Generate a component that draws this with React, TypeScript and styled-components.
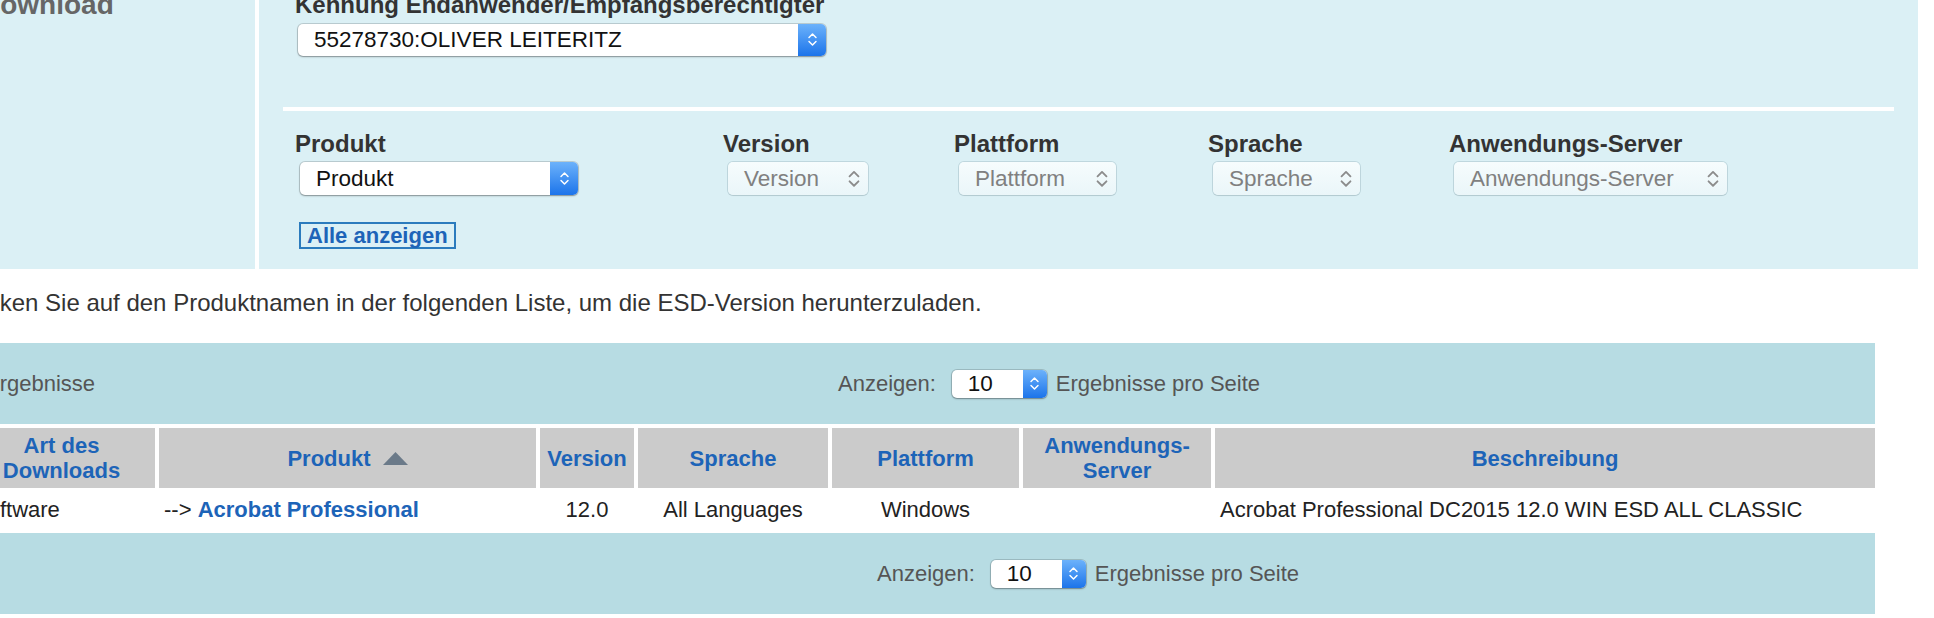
import styled, { createGlobalStyle } from "styled-components";

const GlobalStyle = createGlobalStyle`
  html, body {
    margin: 0;
    padding: 0;
    background: #fff;
    overflow: hidden;
  }
  body {
    font-family: "Liberation Sans", Arial, Helvetica, sans-serif;
    color: #333;
  }
`;

const columns = "187px 377px 94px 190px 187px 188px 660px";

const Page = styled.div`
  width: 1934px;
  height: 618px;
  overflow: hidden;
`;

const TopSection = styled.section`
  display: flex;
  gap: 4px;
  width: 1918px;
  height: 269px;
`;

const LeftPanel = styled.aside`
  width: 255px;
  flex-shrink: 0;
  background: #dbf0f5;
  overflow: hidden;
`;

const PanelTitle = styled.h2`
  margin: -11px 0 0 -20px;
  font-size: 28px;
  line-height: 32px;
  font-weight: bold;
  color: #666;
`;

const FilterPanel = styled.div`
  flex: 1;
  background: #dbf0f5;
  padding: 0 24px;
  overflow: hidden;
`;

const Field = styled.div`
  padding-left: 12px;
  margin-top: -9px;
`;

const Label = styled.div`
  font-size: 24px;
  line-height: 28px;
  font-weight: bold;
  color: #333;
  white-space: nowrap;
`;

const Divider = styled.hr`
  margin: 51px 0 0;
  border: 0;
  height: 4px;
  background: #fff;
`;

const FieldGrid = styled.div`
  display: grid;
  grid-template-columns: 428px 231px 254px 241px auto;
  padding-left: 12px;
  margin-top: 19px;
`;

const SelectBox = styled.div<{ $w: number; $h: number; $disabled?: boolean; $offset?: number; $top?: number }>`
  display: flex;
  align-items: center;
  box-sizing: border-box;
  width: ${({ $w }) => $w}px;
  height: ${({ $h }) => $h}px;
  margin-left: ${({ $offset }) => $offset ?? 0}px;
  margin-top: ${({ $top }) => $top ?? 0}px;
  border-radius: 5px;
  overflow: hidden;
  background: ${({ $disabled }) => ($disabled ? "linear-gradient(#f6fcfd, #eaf6f9)" : "#fff")};
  box-shadow: ${({ $disabled }) =>
    $disabled
      ? "0 0 0 1px rgba(120, 150, 160, .28), 0 1px 1px rgba(0, 0, 0, .08)"
      : "0 0 0 1px rgba(0, 0, 0, .14), 0 1px 2px rgba(0, 0, 0, .3)"};
  font-size: 22.5px;
  color: ${({ $disabled }) => ($disabled ? "#808080" : "#111")};
`;

const SelectText = styled.span`
  flex: 1;
  padding-left: 16px;
  white-space: nowrap;
  overflow: hidden;
`;

const SelectArrow = styled.span<{ $w: number; $disabled?: boolean }>`
  display: flex;
  align-items: center;
  justify-content: center;
  width: ${({ $w }) => $w}px;
  height: 100%;
  flex-shrink: 0;
  background: ${({ $disabled }) => ($disabled ? "transparent" : "linear-gradient(#6cb2fb, #1c74ea)")};
`;

const AllButton = styled.button`
  display: block;
  margin: 27px 0 0 16px;
  padding: 0 6px;
  height: 27px;
  box-sizing: border-box;
  border: 2px solid #2b7bbd;
  background: transparent;
  font-family: inherit;
  font-size: 22px;
  line-height: 23px;
  font-weight: bold;
  color: #1d64b8;
`;

const Instruction = styled.p`
  margin: 20px 0 0 -39px;
  font-size: 24px;
  line-height: 28px;
  color: #333;
  white-space: nowrap;
`;

const Table = styled.div`
  margin: 26px 0 0 -32px;
  width: 1907px;
`;

const Band = styled.div<{ $pagerStart: number; $top?: number }>`
  display: grid;
  grid-template-columns: ${({ $pagerStart }) => $pagerStart}px auto;
  align-items: center;
  height: 81px;
  margin-top: ${({ $top }) => $top ?? 0}px;
  background: #b7dce3;
  font-size: 22px;
  color: #555;
`;

const ResultCount = styled.span`
  padding-left: 17px;
`;

const Pager = styled.div`
  display: flex;
  align-items: center;
  white-space: nowrap;
`;

const HeaderRow = styled.div`
  display: grid;
  grid-template-columns: ${columns};
  column-gap: 4px;
  height: 60px;
  margin-top: 4px;
`;

const HeaderCell = styled.div`
  display: flex;
  align-items: center;
  justify-content: center;
  background: #cbcbcb;
  text-align: center;
  font-size: 22px;
  line-height: 25px;
  font-weight: bold;
  color: #1d64b8;
`;

const DataRow = styled.div`
  display: grid;
  grid-template-columns: ${columns};
  column-gap: 4px;
  align-items: center;
  height: 44px;
  font-size: 22px;
  color: #222;
`;

const DataCell = styled.div<{ $center?: boolean }>`
  padding: 0 5px;
  text-align: ${({ $center }) => ($center ? "center" : "left")};
  white-space: nowrap;
`;

const ProductLink = styled.a`
  font-weight: bold;
  color: #1d64b8;
  text-decoration: none;
`;

const Chevrons = ({ color, size }: { color: string; size: number }) => (
  <svg width={size} height={size * 1.55} viewBox="0 0 14 22">
    <path
      d="M2.5 8.5 L7 4 L11.5 8.5 M2.5 13.5 L7 18 L11.5 13.5"
      fill="none"
      stroke={color}
      strokeWidth="1.9"
      strokeLinecap="round"
      strokeLinejoin="round"
    />
  </svg>
);

const SortUp = () => (
  <svg width="25" height="13" viewBox="0 0 25 13" style={{ marginLeft: 12 }}>
    <polygon points="12.5,0 25,13 0,13" fill="#6b7a89" />
  </svg>
);

type SelectProps = {
  value: string;
  width: number;
  height: number;
  disabled?: boolean;
  offset?: number;
  top?: number;
  arrow?: number;
};

const Select = ({ value, width, height, disabled, offset, top, arrow = 28 }: SelectProps) => (
  <SelectBox $w={width} $h={height} $disabled={disabled} $offset={offset} $top={top}>
    <SelectText>{value}</SelectText>
    <SelectArrow $w={arrow} $disabled={disabled}>
      <Chevrons color={disabled ? "#8c8c8c" : "#fff"} size={disabled ? 14 : 11} />
    </SelectArrow>
  </SelectBox>
);

const filters = [
  { label: "Produkt", width: 278, disabled: false },
  { label: "Version", width: 140, disabled: true },
  { label: "Plattform", width: 157, disabled: true },
  { label: "Sprache", width: 147, disabled: true },
  { label: "Anwendungs-Server", width: 273, disabled: true },
];

const PagerBlock = () => (
  <Pager>
    Anzeigen:
    <Select value="10" width={95} height={28} offset={16} arrow={24} />
    <span style={{ marginLeft: 9 }}>Ergebnisse pro Seite</span>
  </Pager>
);

const App = () => {
  return (
    <Page>
      <GlobalStyle />
      <TopSection>
        <LeftPanel>
          <PanelTitle>Download</PanelTitle>
        </LeftPanel>
        <FilterPanel>
          <Field>
            <Label>Kennung Endanwender/Empfangsberechtigter</Label>
            <Select value="55278730:OLIVER LEITERITZ" width={528} height={32} offset={3} top={5} />
          </Field>
          <Divider />
          <FieldGrid>
            {filters.map(f => (
              <div key={f.label}>
                <Label>{f.label}</Label>
                <Select value={f.label} width={f.width} height={33} disabled={f.disabled} offset={5} top={4} />
              </div>
            ))}
          </FieldGrid>
          <AllButton>Alle anzeigen</AllButton>
        </FilterPanel>
      </TopSection>

      <Instruction>
        Klicken Sie auf den Produktnamen in der folgenden Liste, um die ESD-Version herunterzuladen.
      </Instruction>

      <Table>
        <Band $pagerStart={870}>
          <ResultCount>Ergebnisse</ResultCount>
          <PagerBlock />
        </Band>
        <HeaderRow>
          <HeaderCell>Art des<br />Downloads</HeaderCell>
          <HeaderCell>Produkt<SortUp /></HeaderCell>
          <HeaderCell>Version</HeaderCell>
          <HeaderCell>Sprache</HeaderCell>
          <HeaderCell>Plattform</HeaderCell>
          <HeaderCell>Anwendungs-<br />Server</HeaderCell>
          <HeaderCell>Beschreibung</HeaderCell>
        </HeaderRow>
        <DataRow>
          <DataCell>Software</DataCell>
          <DataCell>--&gt; <ProductLink href="#">Acrobat Professional</ProductLink></DataCell>
          <DataCell $center>12.0</DataCell>
          <DataCell $center>All Languages</DataCell>
          <DataCell $center>Windows</DataCell>
          <DataCell $center></DataCell>
          <DataCell>Acrobat Professional DC2015 12.0 WIN ESD ALL CLASSIC</DataCell>
        </DataRow>
        <Band $pagerStart={909} $top={1}>
          <span />
          <PagerBlock />
        </Band>
      </Table>
    </Page>
  );
};

export default App;
